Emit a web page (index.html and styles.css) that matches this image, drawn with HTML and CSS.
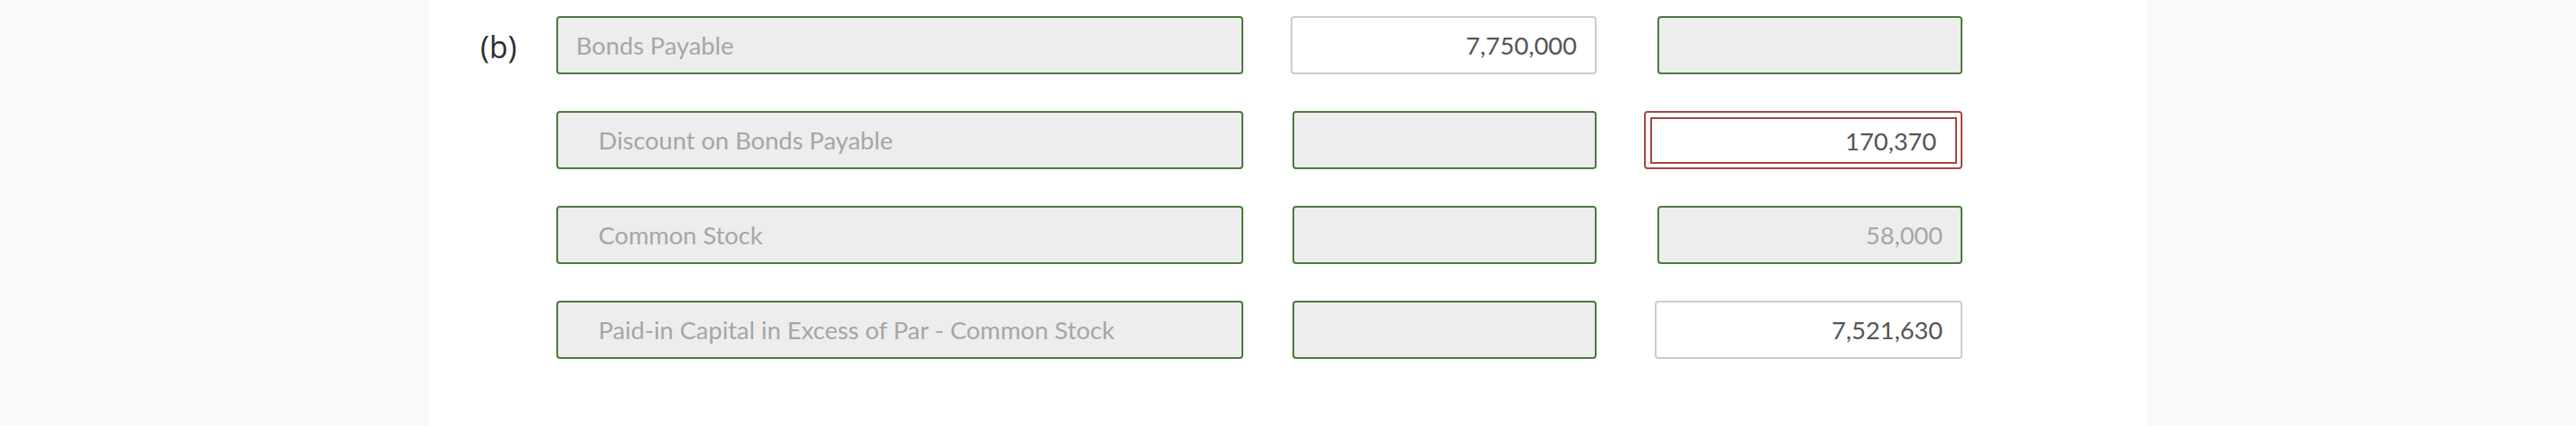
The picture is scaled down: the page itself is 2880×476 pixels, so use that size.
FILE: index.html
```html
<!DOCTYPE html>
<html>
<head>
<meta charset="utf-8">
<link rel="stylesheet" href="styles.css">
</head>
<body>
<div class="panel">
  <div class="rows">
    <div class="row">
      <div class="marker">(b)</div>
      <div class="field label">Bonds Payable</div>
      <div class="col2"><div class="field value white">7,750,000</div></div>
      <div class="col3"><div class="field value"></div></div>
    </div>
    <div class="row">
      <div class="marker"></div>
      <div class="field label indent">Discount on Bonds Payable</div>
      <div class="col2"><div class="field value"></div></div>
      <div class="col3">
        <div class="error-wrap"><div class="field value error">170,370</div></div>
      </div>
    </div>
    <div class="row">
      <div class="marker"></div>
      <div class="field label indent">Common Stock</div>
      <div class="col2"><div class="field value"></div></div>
      <div class="col3"><div class="field value">58,000</div></div>
    </div>
    <div class="row">
      <div class="marker"></div>
      <div class="field label indent">Paid-in Capital in Excess of Par - Common Stock</div>
      <div class="col2"><div class="field value"></div></div>
      <div class="col3"><div class="field value white wide">7,521,630</div></div>
    </div>
  </div>
</div>
</body>
</html>
```
FILE: styles.css
```css
html, body {
  margin: 0;
  padding: 0;
  background: #f9f9f9;
  height: 476px;
  overflow: hidden;
}
.panel {
  width: 1920px;
  height: 476px;
  margin: 0 auto;
  background: #ffffff;
  box-sizing: border-box;
  padding: 18px 0 0 57px;
}
.rows {
  display: flex;
  flex-direction: column;
  gap: 41px;
}
.row {
  display: flex;
  align-items: center;
  height: 65px;
}
.marker {
  width: 85px;
  flex: none;
  font-family: "Open Sans", "Noto Sans", sans-serif;
  font-size: 34px;
  color: #2b2f33;
  line-height: 65px;
  padding-top: 3px;
  box-sizing: border-box;
}
.field {
  box-sizing: border-box;
  height: 65px;
  border: 2px solid #4a7a3c;
  border-radius: 4px;
  background: #ededed;
  font-family: Lato, "Liberation Sans", sans-serif;
  font-size: 27.5px;
  color: #a6a6a6;
  display: flex;
  align-items: center;
}
.label {
  width: 768px;
  flex: none;
  padding-left: 20px;
}
.label.indent {
  padding-left: 45px;
}
.col2 {
  width: 342px;
  margin-left: 53px;
  flex: none;
  display: flex;
  justify-content: flex-end;
}
.col2 .field { width: 340px; }
.col3 {
  width: 356px;
  margin-left: 53px;
  flex: none;
  display: flex;
  justify-content: flex-end;
}
.value {
  width: 341px;
  justify-content: flex-end;
  padding-right: 20px;
}
.col2 .white { width: 343px; }
.white {
  background: #ffffff;
  border-color: #cccccc;
  color: #555555;
}
.wide { width: 344px; }
.error-wrap {
  box-sizing: border-box;
  width: 356px;
  height: 65px;
  border: 2px solid #a64646;
  border-radius: 4px;
  padding: 5px 4px 4px 5px;
  background: #ffffff;
}
.error {
  width: 100%;
  height: 100%;
  border-radius: 0;
  border-color: #a64646;
  background: #ffffff;
  color: #555555;
  padding-right: 21px;
}
```
